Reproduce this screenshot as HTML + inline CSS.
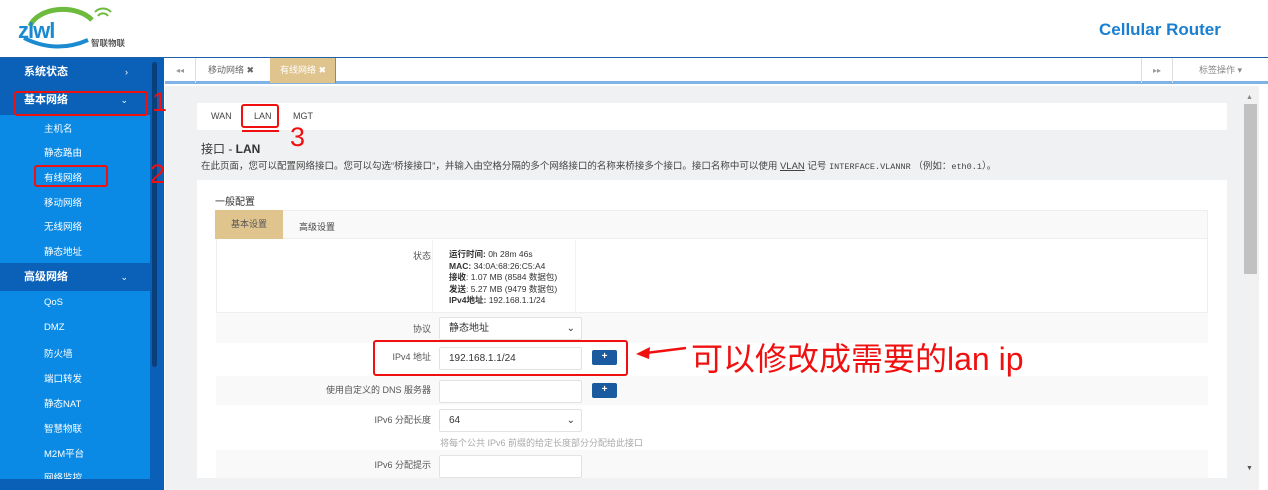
<!DOCTYPE html>
<html><head><meta charset="utf-8"><style>
*{margin:0;padding:0;box-sizing:border-box}
body{width:1268px;height:490px;overflow:hidden;background:#fff;font-family:"Liberation Sans","Noto Sans CJK SC",sans-serif;position:relative;font-size:10px;color:#333}
.a{position:absolute}
.side{left:0;top:58px;width:164px;height:432px;background:#0a5fb7}
.mi{position:absolute;left:0;width:150px;color:#fff;font-weight:bold;font-size:11px;padding-left:24px;line-height:28px;background:#0b60b8}
.mi span{position:absolute;right:22px;font-weight:normal;font-size:9px}
.sub{position:absolute;left:0;width:150px;background:#0a8ae5}
.si{position:absolute;left:44px;color:#fff;font-size:9.5px}
.red{position:absolute;border:2px solid #f01010;border-radius:3px}
.num{position:absolute;color:#f01010;font-size:27px;font-family:"Liberation Sans",sans-serif}
.lbl{position:absolute;right:837px;font-size:9px;color:#555;text-align:right}
.inp{position:absolute;left:439px;width:143px;height:23px;background:#fff;border:1px solid #e2e2e2;border-radius:2px;font-size:10px;padding-left:9px;line-height:21px;color:#333}
.plus{position:absolute;left:592px;width:25px;height:15px;background:#1a5a9e;border-radius:2px;color:#fff;font-size:10px;text-align:center;line-height:14px;font-weight:bold}
.row{position:absolute;left:216px;width:992px}
</style></head><body>
<!-- header -->
<svg class="a" style="left:16px;top:6px" width="130" height="48" viewBox="0 0 130 48">
<path d="M14 20 A34 22 0 0 1 76 14" stroke="#6cbb3c" stroke-width="5" fill="none"/>
<path d="M82 10 a6 6 0 0 1 10 0 M79 6 a11 11 0 0 1 16 0" stroke="#6cbb3c" stroke-width="2" fill="none"/>
<text x="2" y="32" font-family="Liberation Sans" font-weight="bold" font-size="22" fill="#1a8bd0" letter-spacing="-1">zlwl</text>
<path d="M8 32 Q40 48 72 34" stroke="#1a8bd0" stroke-width="4" fill="none"/>
<text x="75" y="40" font-size="8.5" font-weight="bold" fill="#555" font-family="Noto Sans CJK SC">智联物联</text>
</svg>
<div class="a" style="left:1099px;top:20px;color:#1a7fd0;font-weight:bold;font-size:17px">Cellular Router</div>
<div class="a" style="left:0;top:57px;width:1268px;height:1px;background:#1d5fa8"></div>
<!-- sidebar -->
<div class="a side"></div>
<div class="mi" style="top:58px">系统状态<span>›</span></div>
<div class="mi" style="top:86px">基本网络<span>⌄</span></div>
<div class="sub" style="top:115px;height:148px"></div>
<div class="si" style="top:121px">主机名</div><div class="si" style="top:145px">静态路由</div><div class="si" style="top:170px">有线网络</div><div class="si" style="top:195px">移动网络</div><div class="si" style="top:219px">无线网络</div><div class="si" style="top:244px">静态地址</div>
<div class="mi" style="top:263px">高级网络<span>⌄</span></div>
<div class="sub" style="top:291px;height:188px"></div>
<div class="si" style="top:297px">QoS</div><div class="si" style="top:322px">DMZ</div><div class="si" style="top:346px">防火墙</div><div class="si" style="top:371px">端口转发</div><div class="si" style="top:396px">静态NAT</div><div class="si" style="top:421px">智慧物联</div><div class="si" style="top:446px">M2M平台</div><div class="si" style="top:470px">网络监控</div>
<div class="a" style="left:152px;top:62px;width:5px;height:305px;background:#0a3f7a;border-radius:3px"></div>
<!-- tab bar -->
<div class="a" style="left:165px;top:58px;width:1103px;height:26px;background:#fff;border-bottom:3px solid #7fb2e5"></div>
<div class="a" style="left:165px;top:58px;width:31px;height:25px;border-right:1px solid #ddd;color:#999;font-size:8px;text-align:center;line-height:25px">◂◂</div>
<div class="a" style="left:197px;top:58px;width:72px;height:25px;color:#666;font-size:9px;line-height:25px;padding-left:11px">移动网络 ✖</div>
<div class="a" style="left:270px;top:58px;width:66px;height:25px;background:#e0c48e;color:#fff;font-size:9px;line-height:25px;padding-left:10px;border-right:1px solid #6a8fb0">有线网络 ✖</div>
<div class="a" style="left:1141px;top:58px;width:31px;height:25px;border-left:1px solid #ddd;color:#999;font-size:8px;text-align:center;line-height:25px">▸▸</div>
<div class="a" style="left:1172px;top:58px;width:96px;height:25px;border-left:1px solid #ddd;color:#888;font-size:9px;text-align:center;line-height:25px">标签操作 ▾</div>
<!-- content -->
<div class="a" style="left:165px;top:86px;width:1076px;height:404px;background:#eff1f2"></div>
<div class="a" style="left:1241px;top:86px;width:18px;height:404px;background:#f1f1f1"></div>
<div class="a" style="left:1244px;top:104px;width:13px;height:170px;background:#c1c1c1"></div>
<div class="a" style="left:1246px;top:94px;color:#888;font-size:7px">▲</div>
<div class="a" style="left:1246px;top:465px;color:#555;font-size:7px">▼</div>
<div class="a" style="left:197px;top:103px;width:1030px;height:27px;background:#fff"></div>
<div class="a" style="left:211px;top:111px;font-size:9px;color:#444">WAN</div>
<div class="a" style="left:254px;top:111px;font-size:9px;color:#444">LAN</div>
<div class="a" style="left:293px;top:111px;font-size:9px;color:#444">MGT</div>
<div class="a" style="left:201px;top:140px;font-size:12px;color:#333">接口 - <b>LAN</b></div>
<div class="a" style="left:201px;top:158px;font-size:9.5px;color:#444">在此页面，您可以配置网络接口。您可以勾选“桥接接口”，并输入由空格分隔的多个网络接口的名称来桥接多个接口。接口名称中可以使用 <u>VLAN</u> 记号 <span style="font-family:'Liberation Mono';font-size:8.5px">INTERFACE.VLANNR</span> （例如：<span style="font-family:'Liberation Mono';font-size:8.5px">eth0.1</span>）。</div>
<div class="a" style="left:197px;top:180px;width:1030px;height:298px;background:#fff"></div>
<div class="a" style="left:215px;top:193px;font-size:10px;color:#333">一般配置</div>
<div class="a" style="left:215px;top:210px;width:993px;height:29px;background:#f9f9f9;border:1px solid #eee"></div>
<div class="a" style="left:215px;top:210px;width:68px;height:29px;background:#e0c48e;color:#555;font-size:9px;text-align:center;line-height:29px">基本设置</div>
<div class="a" style="left:299px;top:220px;font-size:9px;color:#444">高级设置</div>
<div class="row" style="top:239px;height:74px;background:#fff;border:1px solid #eee;border-top:0"></div>
<div class="a" style="left:432px;top:240px;width:144px;height:72px;border-left:1px solid #f2f2f2;border-right:1px solid #f2f2f2"></div>
<div class="lbl" style="top:249px">状态</div>
<div class="a" style="left:449px;top:249px;font-size:8.5px;line-height:11.6px;color:#333"><b>运行时间:</b> 0h 28m 46s<br><b>MAC:</b> 34:0A:68:26:C5:A4<br><b>接收</b>: 1.07 MB (8584 数据包)<br><b>发送</b>: 5.27 MB (9479 数据包)<br><b>IPv4地址:</b> 192.168.1.1/24</div>
<div class="row" style="top:313px;height:30px;background:#f9f9f9"></div>
<div class="lbl" style="top:322px">协议</div>
<div class="inp" style="top:317px">静态地址<span style="position:absolute;right:6px;font-size:10px">⌄</span></div>
<div class="lbl" style="top:350px">IPv4 地址</div>
<div class="inp" style="top:347px">192.168.1.1/24</div>
<div class="plus" style="top:350px">+</div>
<div class="row" style="top:376px;height:29px;background:#f9f9f9"></div>
<div class="lbl" style="top:383px">使用自定义的 DNS 服务器</div>
<div class="inp" style="top:380px"></div>
<div class="plus" style="top:383px">+</div>
<div class="lbl" style="top:413px">IPv6 分配长度</div>
<div class="inp" style="top:409px">64<span style="position:absolute;right:6px;font-size:10px">⌄</span></div>
<div class="a" style="left:440px;top:436px;font-size:9px;color:#aaa">将每个公共 IPv6 前缀的给定长度部分分配给此接口</div>
<div class="row" style="top:450px;height:28px;background:#f9f9f9"></div>
<div class="lbl" style="top:458px">IPv6 分配提示</div>
<div class="inp" style="top:455px"></div>
<div class="a" style="left:165px;top:478px;width:1076px;height:12px;background:#eff1f2"></div>
<div class="a" style="left:0;top:479px;width:164px;height:11px;background:#0a5fb7"></div>
<!-- annotations -->
<div class="red" style="left:14px;top:91px;width:134px;height:25px"></div>
<div class="num" style="left:152px;top:87px">1</div>
<div class="red" style="left:34px;top:165px;width:74px;height:22px"></div>
<div class="num" style="left:150px;top:159px">2</div>
<div class="red" style="left:241px;top:104px;width:38px;height:24px"></div>
<div class="a" style="left:242px;top:130px;width:37px;height:2px;background:#f01010"></div>
<div class="num" style="left:290px;top:122px">3</div>
<div class="red" style="left:373px;top:340px;width:255px;height:36px"></div>
<svg class="a" style="left:632px;top:340px" width="60" height="24"><path d="M54 8 L14 13" stroke="#f01010" stroke-width="2.5"/><path d="M4 14 L18 7 L17 19 Z" fill="#f01010"/></svg>
<div class="a" style="left:691px;top:334px;color:#f01010;font-size:32px;white-space:nowrap">可以修改成需要的lan ip</div>
</body></html>
